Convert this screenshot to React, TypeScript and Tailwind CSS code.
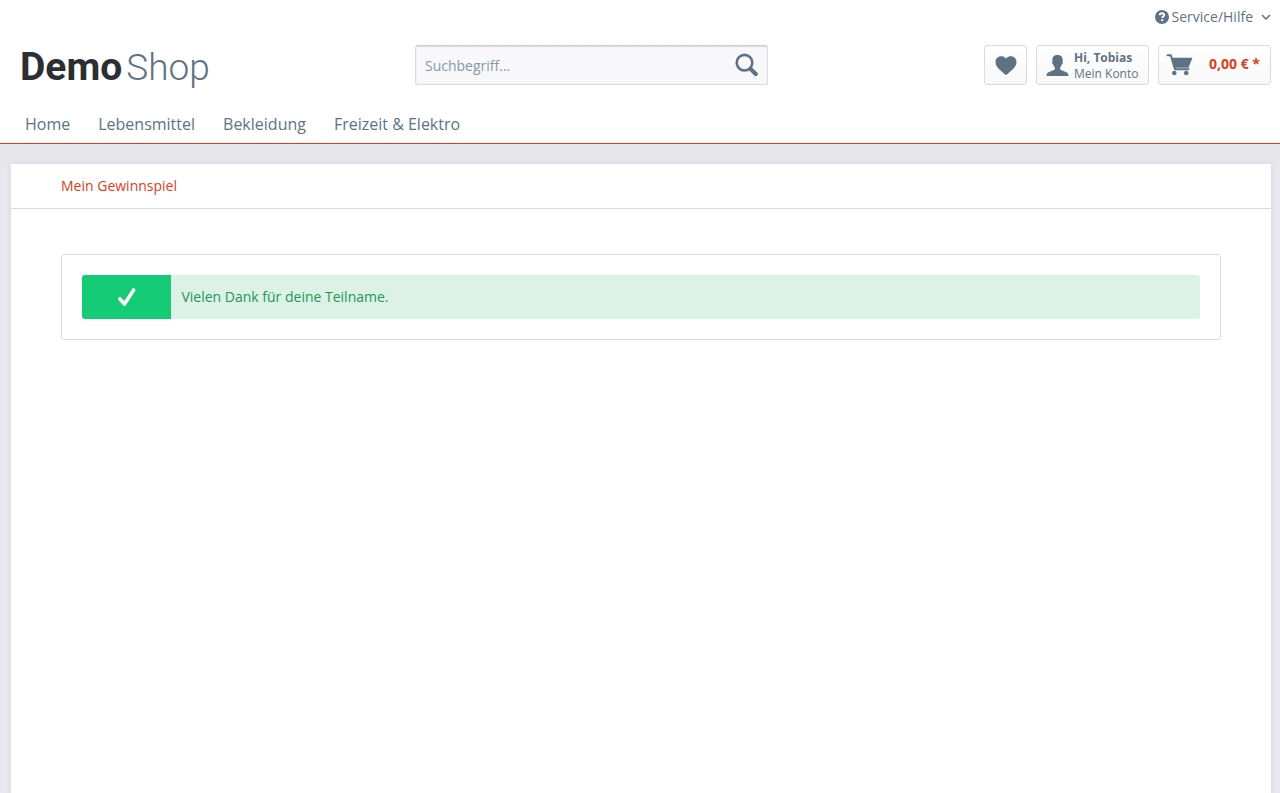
import React from 'react';

const HelpIcon = () => (
  <svg viewBox="0 0 14 14" className="size-3.5" aria-hidden="true">
    <circle cx="7" cy="7" r="7" fill="#5f7285" />
    <path d="M4.7 5.3C4.8 3.9 5.8 3.3 7 3.3s2.1.6 2.1 1.7c0 1.5-1.9 1.5-1.9 3.1" fill="none" stroke="#fff" strokeWidth="1.9" />
    <rect x="6.2" y="9.2" width="2" height="1.9" fill="#fff" />
  </svg>
);

const ChevronIcon = () => (
  <svg viewBox="0 0 10 6" className="h-1.5 w-2.5" aria-hidden="true">
    <path d="M1 1l4 4 4-4" fill="none" stroke="#5f7285" strokeWidth="1.5" />
  </svg>
);

const SearchIcon = () => (
  <svg viewBox="0 0 24 24" className="size-6" aria-hidden="true">
    <circle cx="9.5" cy="9.7" r="7.8" fill="none" stroke="#5f7285" strokeWidth="2.6" />
    <path d="M15.6 16l5.2 5" stroke="#5f7285" strokeWidth="4.2" strokeLinecap="round" />
  </svg>
);

const HeartIcon = () => (
  <svg viewBox="0 0 22 19" className="h-[19px] w-[22px]" aria-hidden="true">
    <path d="M11 2.6C12.4.8 14.2.3 15.8.3c3.3 0 5.7 2.4 5.7 5.8 0 2.8-1.3 4.7-3.4 6.8L12 18.4q-1 .8-2 0L3.9 12.9C1.8 10.8.5 8.9.5 6.1.5 2.7 2.9.3 6.2.3c1.6 0 3.4.5 4.8 2.3z" fill="#5f7285" />
  </svg>
);

const AccountIcon = () => (
  <svg viewBox="0 0 23 21" className="h-[21px] w-[23px]" aria-hidden="true">
    <path d="M11.5 0C8.3 0 6.3 1.9 6.3 5c0 .8.1 1.3.2 1.800-.7.2-.5 1.9.4 2.3.5 1.5 1.2 2.6 2 3.300v1.700c-.5 1.100-2 1.500-4.600 2.300C1.700 17.200.5 18.300.5 21h22c0-2.700-1.200-3.800-3.800-4.600-2.600-.8-4.100-1.200-4.600-2.300v-1.700c.8-.7 1.500-1.800 2-3.300.9-.4 1.100-2.100.4-2.300.1-.5.2-1 .2-1.800 0-3.100-2-5-5.200-5z" fill="#5f7285" />
  </svg>
);

const CartIcon = () => (
  <svg viewBox="0 0 27 22" className="h-[22px] w-[27px]" aria-hidden="true">
    <path d="M1.5 1.3h3.300l4.200 13.900h13.500" fill="none" stroke="#5f7285" strokeWidth="2" strokeLinecap="round" strokeLinejoin="round" />
    <path d="M5 3.800h21.500l-4 9.900H8.200z" fill="#5f7285" />
    <circle cx="8.300" cy="19" r="2.300" fill="#5f7285" />
    <circle cx="20.200" cy="19" r="2.300" fill="#5f7285" />
  </svg>
);

const CheckIcon = () => (
  <svg viewBox="0 0 18 18" className="size-[18px]" aria-hidden="true">
    <path d="M1.900 11L6.500 16 15.600 1.900" fill="none" stroke="#fff" strokeWidth="3.600" strokeLinecap="round" strokeLinejoin="round" />
  </svg>
);

const navItems = ['Home', 'Lebensmittel', 'Bekleidung', 'Freizeit & Elektro'];

const actionClass =
  'flex h-10 items-center rounded-[3px] border border-[#dadae5] bg-linear-to-b from-white to-[#f8f8fa]';

export default function App() {
  return (
    <div className="flex min-h-screen flex-col bg-[#e7e8ed] font-['Open_Sans',sans-serif] text-sm text-[#5f7285]">
      <header className="border-b border-[#dc3d20] bg-white">
        <div className="flex h-[45px] items-start justify-end px-[9px] pt-[5px]">
          <button type="button" className="flex h-6 items-center">
            <HelpIcon />
            <span className="ml-[3px]">Service/Hilfe</span>
            <span className="ml-2">
              <ChevronIcon />
            </span>
          </button>
        </div>

        <div className="flex h-10 items-center pr-[9px] pl-5">
          <div className="w-[395px] shrink-0">
            <a href="#home" aria-label="DemoShop" className="inline-flex items-baseline gap-1 pt-1 font-['Roboto',sans-serif] leading-10">
              <span className="text-[39px] font-bold text-[#2b2f33]">Demo</span>
              <span className="text-[37px] font-light">Shop</span>
            </a>
          </div>

          <form role="search" className="flex h-10 w-[28.2%] items-center rounded-[3px] border border-[#dadae5] border-t-[#cbcbdb] bg-[#f8f8fa] pr-2 pl-[9px] shadow-[inset_0_1px_1px_#dadae5]">
            <input
              type="search"
              aria-label="Suchbegriff"
              placeholder="Suchbegriff..."
              className="min-w-0 flex-1 bg-transparent pt-0.5 outline-none placeholder:text-[#8798a9]"
            />
            <button type="button" aria-label="Suchen">
              <SearchIcon />
            </button>
          </form>

          <div className="ml-auto flex gap-[9px]">
            <button type="button" aria-label="Merkzettel" className={`${actionClass} w-[43px] justify-center`}>
              <HeartIcon />
            </button>
            <button type="button" className={`${actionClass} w-[113px] gap-[5px] pl-[9px] text-left`}>
              <AccountIcon />
              <span className="pt-0.5 text-xs leading-4">
                <strong className="block font-bold">Hi, Tobias</strong>
                <span className="block">Mein Konto</span>
              </span>
            </button>
            <button type="button" aria-label="Warenkorb" className={`${actionClass} w-[113px] justify-between pr-2.5 pl-[7px]`}>
              <CartIcon />
              <span className="pb-0.5 font-bold text-[#dc3d20]">0,00 € *</span>
            </button>
          </div>
        </div>

        <nav className="flex h-[58px] items-center gap-7 px-[25px] pt-5 text-base">
          {navItems.map((item) => (
            <a key={item} href="#kategorie">
              {item}
            </a>
          ))}
        </nav>
      </header>

      <main className="mt-5 mr-[9px] ml-[11px] flex-1 bg-white shadow-[0_0_4px_1px_#dadae5]">
        <div className="flex h-[45px] items-center border-b border-[#dadae5] px-[50px]">
          <a href="#gewinnspiel" className="text-[#dc3d20]">
            Mein Gewinnspiel
          </a>
        </div>
        <section className="mx-[50px] mt-[45px] rounded-[3px] border border-[#dadae5] p-5">
          <div role="status" className="flex h-11 overflow-hidden rounded-[3px] bg-[#dcf2e6] text-[#1f9655]">
            <div className="flex w-[8%] items-center justify-center bg-[#15cb76]">
              <CheckIcon />
            </div>
            <p className="self-center px-2.5">Vielen Dank für deine Teilname.</p>
          </div>
        </section>
      </main>
    </div>
  );
}
